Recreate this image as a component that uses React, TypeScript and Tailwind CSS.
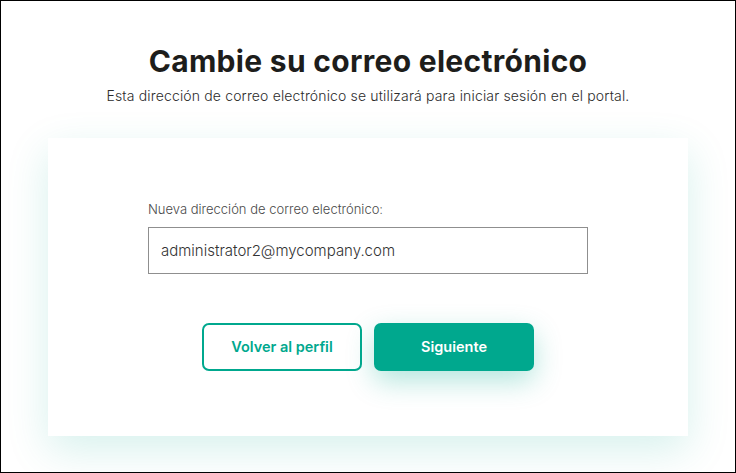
import React from 'react';

export default function App() {
  return (
    <div className="w-[736px] h-[473px] border border-black bg-white flex flex-col items-center font-['Inter',sans-serif] text-[#1d1d1b]">
      <h1 className="mt-[41px] text-[30px] leading-[38px] font-bold tracking-[0.3px]">
        Cambie su correo electrónico
      </h1>
      <p className="mt-[7px] text-[14px] leading-[18px] text-[#2b2b2b] font-light tracking-[0.15px]">
        Esta dirección de correo electrónico se utilizará para iniciar sesión en el portal.
      </p>

      {/* Card */}
      <div className="mt-[33px] w-[640px] h-[298px] bg-white shadow-[0_14px_40px_rgba(0,168,142,0.16)] flex flex-col items-center">
        <div className="mt-[63px] w-[440px] flex flex-col">
          <label className="text-[13px] leading-[16px] text-[#4a4a4a] font-light">
            Nueva dirección de correo electrónico:
          </label>
          <input
            type="email"
            defaultValue="administrator2@mycompany.com"
            className="mt-[10px] h-[47px] w-full border border-[#8f8f8f] px-[12px] text-[15px] text-[#333] font-light outline-none"
          />
        </div>

        <div className="mt-[49px] flex gap-[12px]">
          <button className="w-[160px] h-[48px] rounded-[7px] border-2 border-[#00a88e] text-[#00a88e] text-[14.5px] font-semibold bg-white">
            Volver al perfil
          </button>
          <button className="w-[160px] h-[48px] rounded-[7px] bg-[#00a88e] text-white text-[14.5px] font-semibold shadow-[0_10px_28px_rgba(0,168,142,0.3)]">
            Siguiente
          </button>
        </div>
      </div>
    </div>
  );
}
